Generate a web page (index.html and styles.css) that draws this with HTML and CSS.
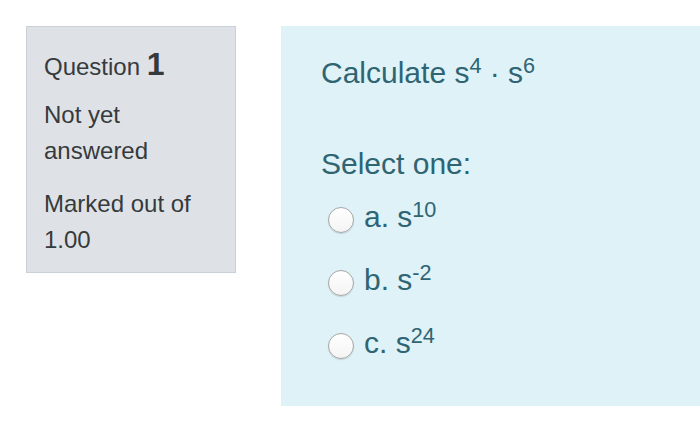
FILE: index.html
```html
<!DOCTYPE html>
<html lang="en">
<head>
<meta charset="utf-8">
<title>Question 1</title>
<link rel="stylesheet" href="styles.css">
</head>
<body>
<div class="page">
  <div class="info">
    <h3 class="no">Question <span class="qno">1</span></h3>
    <div class="state">Not yet answered</div>
    <div class="grade">Marked out of 1.00</div>
  </div>
  <div class="content">
    <div class="qtext">Calculate s<sup>4</sup> · s<sup>6</sup></div>
    <div class="prompt">Select one:</div>
    <div class="answer">
      <label class="option"><span class="radio"></span><span class="opt-text">a. s<sup>10</sup></span></label>
      <label class="option"><span class="radio"></span><span class="opt-text">b. s<sup>-2</sup></span></label>
      <label class="option"><span class="radio"></span><span class="opt-text">c. s<sup>24</sup></span></label>
    </div>
  </div>
</div>
</body>
</html>
```

FILE: styles.css
```css
html, body {
  margin: 0;
  padding: 0;
  background: #ffffff;
  overflow: hidden;
}

body {
  font-family: "Liberation Sans", Arial, Helvetica, sans-serif;
}

.page {
  display: flex;
  align-items: flex-start;
  gap: 45px;
  padding: 26px 0 0 26px;
}

.info {
  box-sizing: border-box;
  flex: 0 0 210px;
  width: 210px;
  background: #dee2e6;
  border: 1px solid #cad0d7;
  padding: 22px 17px 14px 17px;
  color: #373a3c;
  font-size: 24px;
  line-height: 36px;
}

.no {
  margin: 0;
  font-size: 24px;
  font-weight: normal;
  line-height: 36px;
}

.qno {
  font-size: 32px;
  font-weight: bold;
  line-height: 0;
}

.state {
  margin-top: 12px;
}

.grade {
  margin-top: 17px;
}

.content {
  flex: 1 1 auto;
  box-sizing: border-box;
  height: 380px;
  background: #def2f8;
  color: #2f6473;
  padding: 24px 20px 0 40px;
  font-size: 30px;
  line-height: 45px;
}

sup {
  font-size: 72%;
  line-height: 0;
  vertical-align: 0.47em;
}

.prompt {
  margin-top: 46px;
}

.answer {
  margin-top: 8px;
  padding-left: 7px;
  display: flex;
  flex-direction: column;
  gap: 18px;
}

.option {
  display: flex;
  align-items: center;
  gap: 10px;
  height: 45px;
}

.radio {
  box-sizing: border-box;
  flex: 0 0 26px;
  width: 26px;
  height: 26px;
  margin-top: 6px;
  border-radius: 50%;
  border: 1px solid #a6a6a6;
  background: linear-gradient(#ffffff, #f4f4f4);
  box-shadow: 0 1px 1px rgba(0, 0, 0, 0.12);
}

.opt-text {
  white-space: nowrap;
}
```
